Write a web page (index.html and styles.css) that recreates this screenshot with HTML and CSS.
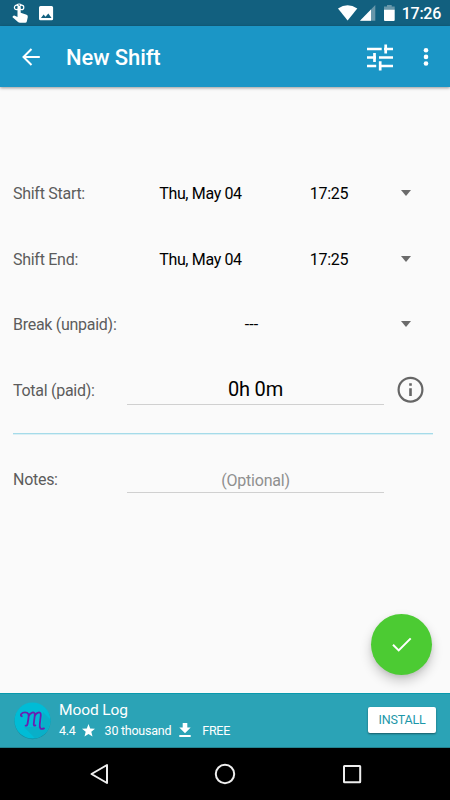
FILE: index.html
```html
<!DOCTYPE html>
<html lang="en">
<head>
    <meta charset="UTF-8" />
    <meta name="viewport" content="width=device-width, initial-scale=1" />
    <title>New Shift</title>
    <link rel="stylesheet" href="styles.css">
</head>
<body>
    <div class="statusbar">
        <svg class="icon-touch" width="18" height="21" viewBox="0 0 18 21">
            <g fill="none" stroke="#fff" stroke-width="1.2">
                <circle cx="4.6" cy="4.4" r="2.2" />
                <circle cx="9.6" cy="4.4" r="2.2" />
                <path d="M4.8 1.8 Q7.1 0.2 9.4 1.8" />
            </g>
            <path fill="#fff" d="M5.5 3.6 Q7.1 2.4 8.7 3.6 V9.7 L14.6 11.8 Q16 12.3 15.8 14 L14.8 18.4 Q14.6 19.8 13.1 19.8 H8 Q6.8 19.8 6 19 L0.3 14 L1.4 12.8 Q2 12.4 2.8 12.7 L5.5 14 Z" />
        </svg>
        <svg class="icon-photo" width="15" height="15" viewBox="0 0 15 15">
            <path fill="#fff" fill-rule="evenodd" d="M1.5 0 H12.6 Q14.1 0 14.1 1.5 V12.8 Q14.1 14.3 12.6 14.3 H1.5 Q0 14.3 0 12.8 V1.5 Q0 0 1.5 0 Z M2 12 H12.6 L9.3 7.4 L6.5 10.7 L4.6 8.6 Z" />
        </svg>
        <svg class="icon-wifi" width="20" height="16" viewBox="0 0 20 16">
            <path fill="#fff" d="M0 3.5 Q9.6 -3.2 19.3 3.5 L9.6 15.6 Z" />
        </svg>
        <svg class="icon-signal" width="16" height="16" viewBox="0 0 16 16">
            <path fill="#6897aa" d="M0 15.7 L15.3 0 V15.7 Z" />
            <path fill="#fff" d="M0 15.7 L11 4.4 V15.7 Z" />
        </svg>
        <svg class="icon-battery" width="11" height="16" viewBox="0 0 11 16">
            <path fill="#6897aa" d="M0 1.5 H3 V0 H7.7 V1.5 H10.7 V5 H0 Z" />
            <path fill="#fff" d="M0 4.8 H10.7 V15 Q10.7 16 9.7 16 H1 Q0 16 0 15 Z" />
        </svg>
        <span class="clock">17:26</span>
    </div>

    <header class="appbar">
        <svg class="back" width="18" height="18" viewBox="0 0 18 18">
            <path fill="none" stroke="#fff" stroke-width="2" d="M17.8 9 H1.6 M9.5 1 L1.5 9 L9.5 17" />
        </svg>
        <h1>New Shift</h1>
        <svg class="tune" width="27" height="27" viewBox="0 0 27 27">
            <path fill="none" stroke="#fff" stroke-width="2.7" d="M0 5 H14.7 M17 5 H26 M18.7 0.4 V9.4 M0 13.5 H9 M7.5 9 V18 M12 13.5 H26 M0 22 H9.2 M13.2 17.2 V26.4 M13 22 H26" />
        </svg>
        <svg class="more" width="6" height="20" viewBox="0 0 6 20">
            <g fill="#fff">
                <circle cx="3" cy="3.3" r="2.3" />
                <circle cx="3" cy="9.9" r="2.3" />
                <circle cx="3" cy="16.5" r="2.3" />
            </g>
        </svg>
    </header>

    <main>
        <div class="row">
            <span class="label">Shift Start:</span>
            <span class="date">Thu, May 04</span>
            <span class="time">17:25</span>
            <span class="arrow"></span>
        </div>
        <div class="row">
            <span class="label">Shift End:</span>
            <span class="date">Thu, May 04</span>
            <span class="time">17:25</span>
            <span class="arrow"></span>
        </div>
        <div class="row">
            <span class="label">Break (unpaid):</span>
            <span class="break">---</span>
            <span class="arrow"></span>
        </div>
        <div class="row">
            <span class="label">Total (paid):</span>
            <span class="field total">0h 0m</span>
            <svg class="info" width="28" height="28" viewBox="0 0 28 28">
                <circle cx="13.5" cy="13.7" r="11.9" fill="none" stroke="#666" stroke-width="2.2" />
                <path fill="#666" d="M12.2 7.2 H14.8 V9.7 H12.2 Z M12.2 12.2 H14.8 V20 H12.2 Z" />
            </svg>
        </div>
        <div class="divider"></div>
        <div class="row notes">
            <span class="label">Notes:</span>
            <span class="field hint">(Optional)</span>
        </div>
        <button class="fab" type="button" aria-label="Save">
            <svg width="20" height="16" viewBox="0 0 20 16">
                <path fill="none" stroke="#fff" stroke-width="2" d="M1 7.8 L6.7 13.4 L18.7 1.4" />
            </svg>
        </button>
    </main>

    <div class="ad">
        <svg class="ad-logo" width="38" height="38" viewBox="0 0 38 38">
            <circle cx="18.5" cy="19.2" r="18" fill="#168a9e" />
            <circle cx="18.5" cy="18.5" r="18" fill="#00bcd6" />
            <path fill="#09afc8" d="M29 10 L36 17 A18 18 0 0 1 21 36.3 L10 25 L27 25 Z" />
            <path fill="none" stroke="#6a1fb0" stroke-width="1.8" stroke-linecap="round" d="M7.8 14.2 C5.6 13.4 7.5 10.3 11 10.3 C14.6 10.3 15 12.6 14.5 16 L13.6 21.5 Q13.2 24 11.6 23.6 M14.6 14.5 C15.8 10.5 21 8.5 20.8 13 L19.8 21.5 Q19.4 24.2 21.4 23.4 M20.8 14 C21.9 10.2 27.2 8.8 26.8 13.2 L25.8 22 C25.2 26.3 26.7 27.8 30 26.4" />
        </svg>
        <div class="ad-text">
            <div class="ad-title">Mood Log</div>
            <div class="ad-info">
                <span>4.4</span>
                <svg class="star" width="13" height="13" viewBox="0 0 13 13">
                    <path fill="#fff" d="M6.5 0 L8.2 4.4 L13 4.7 L9.3 7.8 L10.5 12.5 L6.5 9.9 L2.5 12.5 L3.7 7.8 L0 4.7 L4.8 4.4 Z" />
                </svg>
                <span>30 thousand</span>
                <svg class="download" width="12" height="14" viewBox="0 0 12 14">
                    <path fill="#fff" d="M3.7 0 H8.3 V4.6 H11.7 L6 10.3 L0.3 4.6 H3.7 Z M0.3 12 H11.7 V14 H0.3 Z" />
                </svg>
                <span>FREE</span>
            </div>
        </div>
        <button class="install" type="button">INSTALL</button>
    </div>

    <nav class="navbar">
        <svg width="20" height="22" viewBox="0 0 20 22">
            <path fill="none" stroke="#eee" stroke-width="2" stroke-linejoin="round" d="M18 2 V20 L2.5 11 Z" />
        </svg>
        <svg width="22" height="22" viewBox="0 0 22 22">
            <circle cx="11" cy="11" r="9.2" fill="none" stroke="#eee" stroke-width="2" />
        </svg>
        <svg width="20" height="22" viewBox="0 0 20 22">
            <rect x="2" y="3" width="16.2" height="16.2" rx="0.5" fill="none" stroke="#eee" stroke-width="2" />
        </svg>
    </nav>
</body>
</html>
```
FILE: styles.css
```css
* {
    box-sizing: border-box;
}

body {
    display: flex;
    flex-direction: column;
    height: 800px;
    margin: 0;
    overflow: hidden;
    font-family: Roboto, "Liberation Sans", sans-serif;
    font-size: 16px;
    letter-spacing: -0.28px;
    background: #fafafa;
}

svg {
    display: block;
    flex-shrink: 0;
}

button {
    border: none;
    padding: 0;
    font-family: inherit;
    cursor: pointer;
}

.statusbar {
    display: flex;
    flex-shrink: 0;
    align-items: flex-start;
    height: 26px;
    padding: 3px 9px 0 12px;
    background: #12607f;
    color: white;
}

.icon-photo {
    margin: 3px auto 0 9px;
}

.icon-wifi {
    margin: 2px 2px 0 0;
}

.icon-signal {
    margin: 2px 8px 0 0;
}

.icon-battery {
    margin: 2px 7px 0 0;
}

.clock {
    line-height: 22px;
    font-weight: 500;
}

.appbar {
    display: flex;
    flex-shrink: 0;
    align-items: center;
    height: 61px;
    padding: 0 21px 0 22px;
    background: #1b96c6;
    color: white;
    box-shadow: 0 1px 3px rgba(0,0,0,0.4);
}

.appbar h1 {
    margin: 2px auto 0 26px;
    font-size: 22px;
    font-weight: 500;
    letter-spacing: -0.1px;
}

.tune {
    margin-top: 1px;
}

.more {
    margin-left: 29px;
}

main {
    position: relative;
    flex: 1;
    padding: 74px 17px 0 13px;
}

.row {
    display: grid;
    grid-template-columns: 114px 147px 110px 1fr;
    align-items: center;
    height: 65.6px;
    color: black;
}

.label {
    color: #5c5c5c;
}

.date {
    text-align: center;
    letter-spacing: -0.35px;
}

.time {
    text-align: center;
}

.break {
    grid-column: 2 / 4;
    padding-right: 8px;
    text-align: center;
    letter-spacing: 0;
}

.arrow {
    width: 0;
    margin: -1px 0 0 16.5px;
    border: 5.5px solid transparent;
    border-top: 6px solid #6b6b6b;
    border-bottom: none;
}

.field {
    grid-column: 2 / 4;
    width: 257px;
    border-bottom: 1px solid #d0d0d0;
    text-align: center;
}

.total {
    height: 32px;
    margin-bottom: 3px;
    line-height: 33px;
    font-size: 20px;
    letter-spacing: -0.2px;
}

.info {
    margin: -1px 0 0 13px;
}

.divider {
    height: 2px;
    margin-top: 9.6px;
    background: linear-gradient(#a5dbe9 50%, #dceff4 50%);
}

.notes {
    height: 90px;
}

.hint {
    height: 26px;
    line-height: 27px;
    color: #8f8f8f;
    letter-spacing: -0.2px;
}

.fab {
    position: absolute;
    right: 18px;
    bottom: 18px;
    display: flex;
    align-items: center;
    justify-content: center;
    width: 61px;
    height: 61px;
    border-radius: 50%;
    background: #4ccb33;
    box-shadow: 0 6px 12px rgba(0,0,0,0.2), 0 2px 4px rgba(0,0,0,0.08);
}

.ad {
    display: flex;
    flex-shrink: 0;
    height: 55px;
    padding: 7px 14px 0 14px;
    border-top: 1px solid #0899ac;
    border-bottom: 1px solid #23828f;
    background: #2ba3b6;
    color: white;
    letter-spacing: 0;
}

.ad-logo {
    margin-top: 1px;
}

.ad-text {
    margin: 0 auto 0 7px;
}

.ad-title {
    line-height: 18px;
    font-size: 15.5px;
    letter-spacing: -0.1px;
}

.ad-info {
    display: flex;
    align-items: center;
    height: 14px;
    margin-top: 4px;
    font-size: 12.5px;
    letter-spacing: -0.25px;
}

.star {
    margin: 0 10px 0 6px;
}

.download {
    margin: 0 11px 0 8px;
}

.install {
    width: 68px;
    height: 26px;
    padding-bottom: 1px;
    margin-top: 6px;
    border-radius: 2px;
    background: white;
    color: #1c97a9;
    font-size: 12.5px;
    letter-spacing: -0.2px;
    box-shadow: 0 1px 2px rgba(0,0,0,0.45);
}

.navbar {
    display: flex;
    flex-shrink: 0;
    align-items: center;
    justify-content: space-between;
    height: 52px;
    padding: 0 88.5px;
    background: black;
}
```
